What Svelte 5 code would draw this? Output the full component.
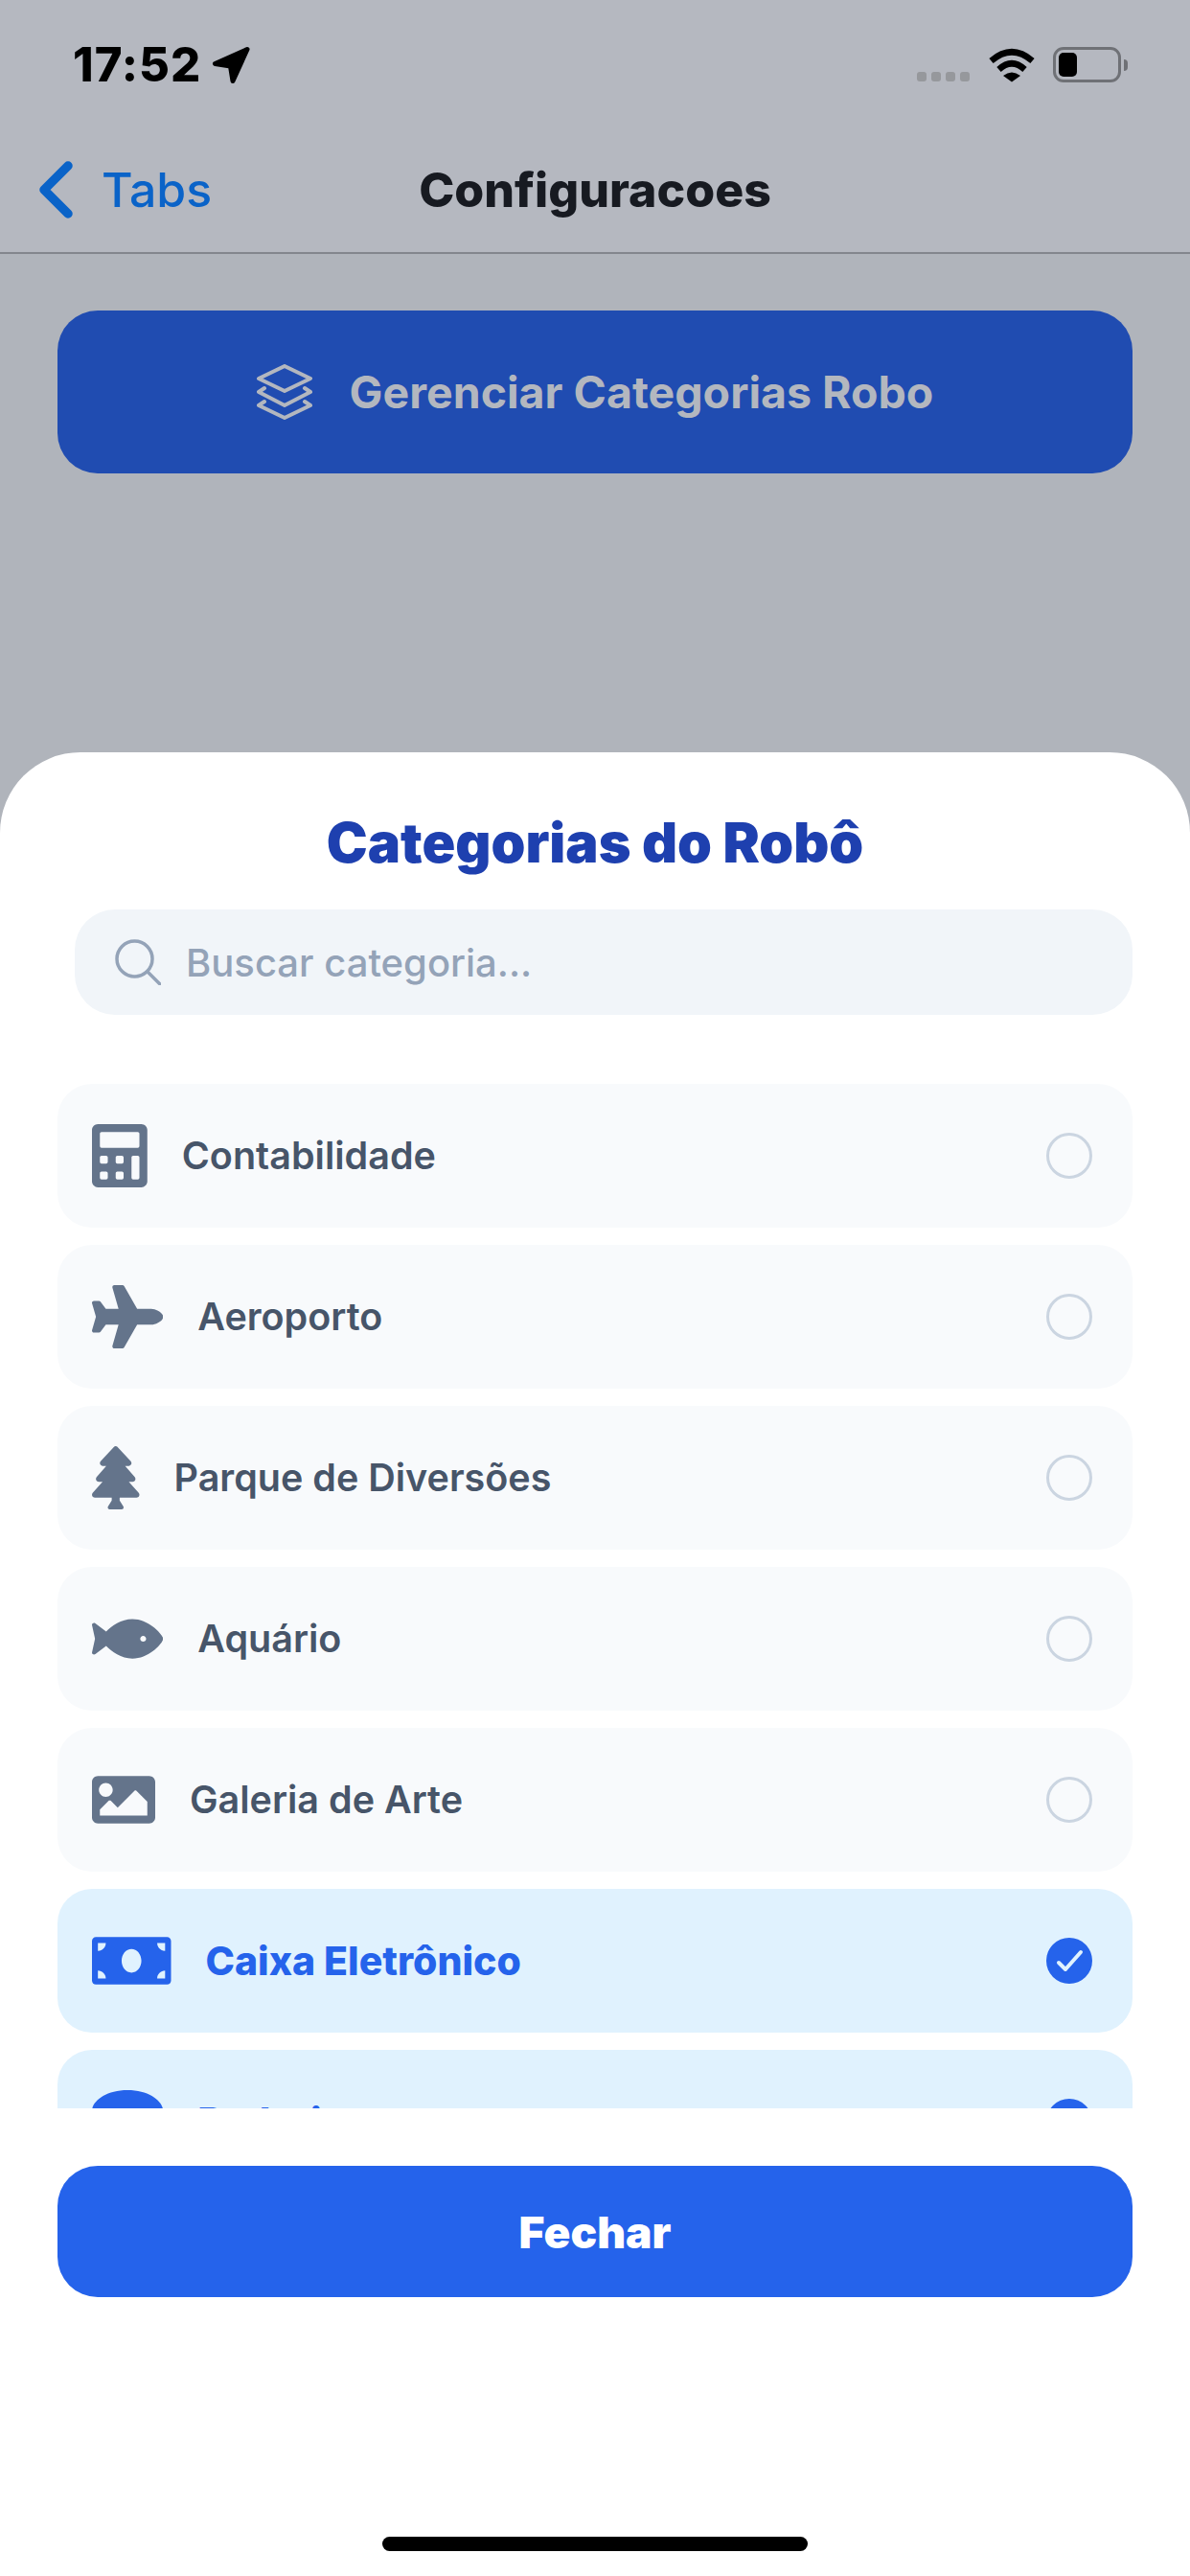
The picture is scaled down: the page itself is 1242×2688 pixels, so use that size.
<script>
	const categories = [
		{
			name: 'Contabilidade',
			w: 448,
			d: 'M400 0H48C22.4 0 0 22.4 0 48v416c0 25.6 22.4 48 48 48h352c25.6 0 48-22.4 48-48V48c0-25.6-22.4-48-48-48zM128 435.2c0 6.4-6.4 12.8-12.8 12.8H76.8c-6.4 0-12.8-6.4-12.8-12.8v-38.4c0-6.4 6.4-12.8 12.8-12.8h38.4c6.4 0 12.8 6.4 12.8 12.8v38.4zm0-128c0 6.4-6.4 12.8-12.8 12.8H76.8c-6.4 0-12.8-6.4-12.8-12.8v-38.4c0-6.4 6.4-12.8 12.8-12.8h38.4c6.4 0 12.8 6.4 12.8 12.8v38.4zm128 128c0 6.4-6.4 12.8-12.8 12.8h-38.4c-6.4 0-12.8-6.4-12.8-12.8v-38.4c0-6.4 6.4-12.8 12.8-12.8h38.4c6.4 0 12.8 6.4 12.8 12.8v38.4zm0-128c0 6.4-6.4 12.8-12.8 12.8h-38.4c-6.4 0-12.8-6.4-12.8-12.8v-38.4c0-6.4 6.4-12.8 12.8-12.8h38.4c6.4 0 12.8 6.4 12.8 12.8v38.4zm128 128c0 6.4-6.4 12.8-12.8 12.8h-38.4c-6.4 0-12.8-6.4-12.8-12.8V268.8c0-6.4 6.4-12.8 12.8-12.8h38.4c6.4 0 12.8 6.4 12.8 12.8v166.4zm0-256c0 6.4-6.4 12.8-12.8 12.8H76.8c-6.4 0-12.8-6.4-12.8-12.8V76.8C64 70.4 70.4 64 76.8 64h294.4c6.4 0 12.8 6.4 12.8 12.8v102.4z'
		},
		{
			name: 'Aeroporto',
			w: 576,
			d: 'M480 192H365.71L260.61 8.06A16.014 16.014 0 0 0 246.71 0h-65.5c-10.63 0-18.3 10.17-15.38 20.39L214.86 192H112l-43.2-57.6c-3.02-4.03-7.77-6.4-12.8-6.4H16.01C5.6 128-2.04 137.78.49 147.88L32 256 .49 364.12C-2.04 374.22 5.6 384 16.01 384H56c5.04 0 9.78-2.37 12.8-6.4L112 320h102.86l-49.03 171.6c-2.92 10.22 4.75 20.4 15.38 20.4h65.5c5.74 0 11.04-3.08 13.89-8.06L365.71 320H480c35.35 0 96-28.65 96-64s-60.65-64-96-64z'
		},
		{
			name: 'Parque de Diversões',
			w: 384,
			d: 'M378.31 378.49L298.42 288h30.63c9.01 0 16.98-5 20.78-13.06 3.8-8.04 2.55-17.26-3.28-24.05L268.42 160h28.89c9.1 0 17.3-5.35 20.86-13.61 3.52-8.13 1.86-17.59-4.24-24.08L203.66 4.83c-6.03-6.45-17.28-6.45-23.32 0L70.06 122.31c-6.1 6.49-7.75 15.95-4.24 24.08C69.38 154.65 77.59 160 86.69 160h28.89l-78.14 90.91c-5.81 6.78-7.06 15.99-3.27 24.04C37.97 283 45.93 288 54.95 288h30.63L5.69 378.49c-6 6.79-7.36 16.09-3.56 24.26 3.75 8.05 12 13.25 21.01 13.25H160v24.45l-30.29 48.4c-5.32 10.64 2.42 23.16 14.31 23.16h95.96c11.89 0 19.63-12.52 14.31-23.16L224 440.45V416h136.86c9.01 0 17.26-5.2 21.01-13.25 3.8-8.17 2.44-17.47-3.56-24.26z'
		},
		{
			name: 'Aquário',
			w: 576,
			d: 'M327.1 96c-89.97 0-168.54 54.77-212.27 101.63L27.5 131.58c-12.13-9.18-30.24.6-27.14 14.66L24.54 256 .35 365.77c-3.1 14.06 15.01 23.83 27.14 14.66l87.33-66.05C158.55 361.23 237.13 416 327.1 416 464.56 416 576 288 576 256S464.56 96 327.1 96zm87.43 184c-13.25 0-24-10.75-24-24 0-13.26 10.75-24 24-24 13.26 0 24 10.74 24 24 0 13.25-10.75 24-24 24z'
		},
		{
			name: 'Galeria de Arte',
			w: 512,
			d: 'M464 448H48c-26.51 0-48-21.49-48-48V112c0-26.51 21.49-48 48-48h416c26.51 0 48 21.49 48 48v288c0 26.51-21.49 48-48 48zM112 120c-30.928 0-56 25.072-56 56s25.072 56 56 56 56-25.072 56-56-25.072-56-56-56zM64 384h384V272l-87.515-87.515c-4.686-4.686-12.284-4.686-16.971 0L208 320l-55.515-55.515c-4.686-4.686-12.284-4.686-16.971 0L64 336v48z'
		},
		{
			name: 'Caixa Eletrônico',
			w: 640,
			selected: true,
			d: 'M608 64H32C14.33 64 0 78.33 0 96v320c0 17.67 14.33 32 32 32h576c17.67 0 32-14.33 32-32V96c0-17.67-14.33-32-32-32zM48 400v-64c35.35 0 64 28.65 64 64H48zm0-224v-64h64c0 35.35-28.65 64-64 64zm272 176c-44.19 0-80-42.99-80-96 0-53.02 35.82-96 80-96s80 42.98 80 96c0 53.03-35.83 96-80 96zm272 48h-64c0-35.35 28.65-64 64-64v64zm0-224c-35.35 0-64-28.65-64-64h64v64z'
		},
		{
			name: 'Padaria',
			w: 576,
			selected: true,
			d: 'M288 0C108 0 0 93.4 0 169.14 0 199.44 24.24 224 64 224v256c0 17.67 16.12 32 36 32h376c19.88 0 36-14.33 36-32V224c39.76 0 64-24.56 64-54.86C576 93.4 468 0 288 0z'
		}
	];
</script>

<div class="screen">
	<div class="header">
		<div class="status">
			<div class="status-left">
				<span class="time">17:52</span>
				<svg class="arrow" width="40" height="40" viewBox="0 0 40 40">
					<path d="M37 3.500 3.500 18.500 19.500 21 22 36.500Z" fill="#000" stroke="#000" stroke-width="5" stroke-linejoin="round" />
				</svg>
			</div>
			<div class="status-right">
				<div class="signal"><i></i><i></i><i></i><i></i></div>
				<svg width="48" height="36" viewBox="0 0 48 36">
					<path d="M2.500 13.500Q24 -5 45.500 13.500" fill="none" stroke="#000" stroke-width="6.500" />
					<path d="M10.500 22.500Q24 10 37.500 22.500" fill="none" stroke="#000" stroke-width="6.500" />
					<path d="M24 35.500 15 29Q24 22 33 29Z" fill="#000" />
				</svg>
				<div class="battery"><div class="battery-fill"></div></div>
			</div>
		</div>
		<div class="nav">
			<div class="back">
				<svg width="36" height="60" viewBox="0 0 36 60">
					<path d="M31 5 6 30 31 55" fill="none" stroke="#0a63c8" stroke-width="9.500" stroke-linecap="round" stroke-linejoin="round" />
				</svg>
				<span>Tabs</span>
			</div>
			<div class="nav-title">Configuracoes</div>
		</div>
	</div>

	<div class="content">
		<div class="manage">
			<svg width="58" height="58" viewBox="0 0 58 58" fill="none" stroke="#b3b7bf" stroke-width="4" stroke-linejoin="round" stroke-linecap="round">
				<path d="M29 2 56 15 29 28 2 15Z" />
				<path d="M8 25 2 29 29 43 56 29 50 25" />
				<path d="M8 39 2 43 29 56 56 43 50 39" />
			</svg>
			<span>Gerenciar Categorias Robo</span>
		</div>
	</div>

	<div class="sheet">
		<div class="sheet-title">Categorias do Robô</div>
		<div class="search">
			<svg width="48" height="48" viewBox="0 0 48 48" fill="none" stroke="#94a3b8" stroke-width="3.500" stroke-linecap="round">
				<circle cx="20.500" cy="20.500" r="18.500" />
				<path d="M34 34 47 47" />
			</svg>
			<span>Buscar categoria...</span>
		</div>
		<div class="list">
			{#each categories as cat}
				<div class="row" class:selected={cat.selected}>
					<svg class="cat-icon" width={(cat.w * 66) / 512} height="66" viewBox="0 0 {cat.w} 512">
						<path d={cat.d} fill="currentColor" />
					</svg>
					<span class="row-name">{cat.name}</span>
					{#if cat.selected}
						<svg class="check" width="48" height="48" viewBox="0 0 48 48">
							<circle cx="24" cy="24" r="24" fill="#2563eb" />
							<path d="M13 26 20 33 36 15" fill="none" stroke="#e0f2fe" stroke-width="4" stroke-linecap="round" stroke-linejoin="round" />
						</svg>
					{:else}
						<div class="radio"></div>
					{/if}
				</div>
			{/each}
		</div>
		<div class="close">Fechar</div>
		<div class="home-wrap"><div class="home"></div></div>
	</div>
</div>

<style>
	:global(body) {
		margin: 0;
		background: #b0b4bb;
	}

	.screen {
		position: relative;
		width: 1242px;
		height: 2688px;
		overflow: hidden;
		background: #b0b4bb;
		font-family: Inter, 'Liberation Sans', sans-serif;
	}

	.header {
		background: #b5b8c0;
		border-bottom: 2px solid #83868d;
	}

	.status {
		height: 132px;
		box-sizing: border-box;
		padding: 48px 64px 0 76px;
		display: flex;
		justify-content: space-between;
		align-items: flex-start;
	}

	.status-left {
		display: flex;
		align-items: center;
		gap: 11px;
		height: 40px;
	}

	.time {
		font-size: 49px;
		font-weight: 800;
		letter-spacing: 1px;
		color: #000;
		line-height: 40px;
	}

	.status-right {
		display: flex;
		align-items: flex-end;
		height: 38px;
	}

	.signal {
		display: flex;
		gap: 5px;
		margin-right: 20px;
		margin-bottom: 1px;
	}

	.signal i {
		width: 10px;
		height: 10px;
		border-radius: 3px;
		background: #96989c;
	}

	.battery {
		position: relative;
		width: 71px;
		height: 37px;
		box-sizing: border-box;
		margin-left: 19px;
		margin-right: 8px;
		border: 3px solid #6f7176;
		border-radius: 11px;
		padding: 3px;
	}

	.battery::after {
		content: '';
		position: absolute;
		right: -10px;
		top: 10px;
		width: 4px;
		height: 12px;
		background: #6f7176;
		border-radius: 0 4px 4px 0;
	}

	.battery-fill {
		width: 19px;
		height: 100%;
		background: #000;
		border-radius: 5px;
	}

	.nav {
		height: 131px;
		display: grid;
		grid-template-columns: 1fr auto 1fr;
		align-items: center;
	}

	.back {
		display: flex;
		align-items: center;
		gap: 30px;
		padding-left: 40px;
		color: #0a63c8;
		font-size: 50px;
		font-weight: 500;
	}

	.nav-title {
		font-size: 50px;
		font-weight: 800;
		color: #171a21;
	}

	.content {
		padding: 59px 60px;
	}

	.manage {
		height: 170px;
		border-radius: 42px;
		background: #204cb1;
		display: flex;
		align-items: center;
		justify-content: center;
		gap: 39px;
		color: #b3b7bf;
		font-size: 46.500px;
		font-weight: 700;
	}

	.sheet {
		position: absolute;
		left: 0;
		right: 0;
		bottom: 0;
		height: 1903px;
		box-sizing: border-box;
		padding: 60px 60px 0;
		background: #fff;
		border-radius: 84px 84px 0 0;
		display: flex;
		flex-direction: column;
	}

	.sheet-title {
		height: 70px;
		line-height: 68px;
		text-align: center;
		font-size: 57.500px;
		font-weight: 900;
		color: #1e40af;
	}

	.search {
		margin: 34px 0 0 18px;
		height: 110px;
		box-sizing: border-box;
		padding-left: 42px;
		border-radius: 42px;
		background: #f1f5f9;
		display: flex;
		align-items: center;
		gap: 26px;
		color: #94a3b8;
		font-size: 40px;
		font-weight: 500;
	}

	.list {
		margin-top: 72px;
		height: 1069px;
		overflow: hidden;
		display: flex;
		flex-direction: column;
		gap: 18px;
	}

	.row {
		flex: none;
		height: 150px;
		box-sizing: border-box;
		padding: 0 42px 0 36px;
		border-radius: 36px;
		background: #f8fafc;
		display: flex;
		align-items: center;
		gap: 36px;
		color: #64748b;
	}

	.row-name {
		flex: 1;
		font-size: 39.500px;
		font-weight: 600;
		color: #475569;
	}

	.row.selected {
		background: #e0f2fe;
		color: #2563eb;
	}

	.row.selected .row-name {
		color: #2563eb;
		font-size: 41px;
		font-weight: 800;
	}

	.radio {
		width: 48px;
		height: 48px;
		box-sizing: border-box;
		border: 3.500px solid #cbd5e1;
		border-radius: 50%;
	}

	.close {
		margin-top: 60px;
		height: 137px;
		border-radius: 42px;
		background: #2563eb;
		display: flex;
		align-items: center;
		justify-content: center;
		color: #fff;
		font-size: 46px;
		font-weight: 900;
	}

	.home-wrap {
		flex: 1;
		display: flex;
		align-items: flex-end;
		justify-content: center;
		padding-bottom: 26px;
	}

	.home {
		width: 444px;
		height: 15px;
		border-radius: 8px;
		background: #000;
	}
</style>
